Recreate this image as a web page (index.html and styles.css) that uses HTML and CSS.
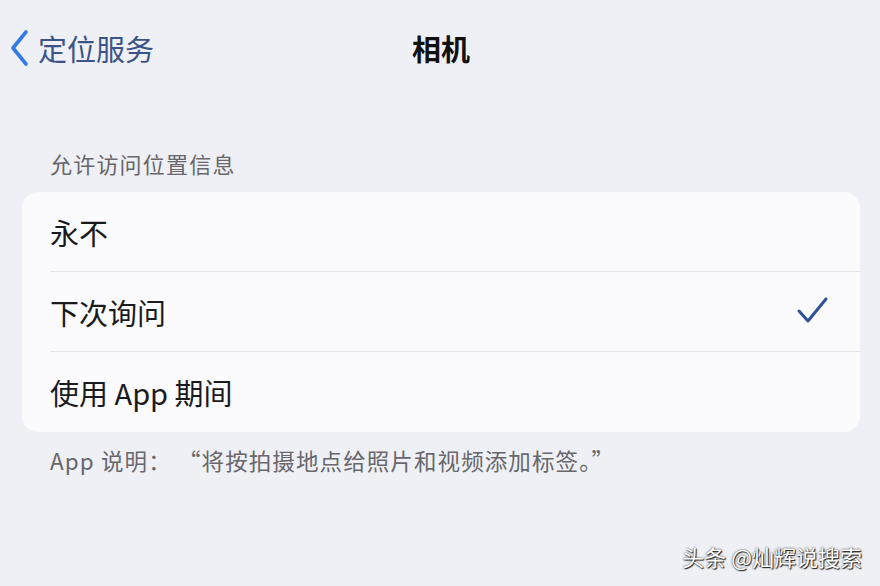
FILE: index.html
```html
<!DOCTYPE html>
<html lang="zh-CN">

<head>
    <meta charset="UTF-8">
    <meta name="viewport" content="width=device-width, initial-scale=1.0">
    <title>相机</title>
    <link rel="stylesheet" href="styles.css">
</head>

<body>
    <div class="screen">
        <div class="navBar">
            <div class="backButton">
                <svg class="chevron" width="22" height="38" viewBox="0 0 22 38">
                    <path d="M18 3 L5 19 L18 35" fill="none" stroke="#3579e6" stroke-width="3.6" stroke-linecap="round" stroke-linejoin="round" />
                </svg>
                <span>定位服务</span>
            </div>
            <div class="navTitle">相机</div>
        </div>

        <div class="sectionHeader">允许访问位置信息</div>
        <div class="card">
            <div class="row">
                <span>永不</span>
            </div>
            <div class="row">
                <span>下次询问</span>
                <svg class="check" width="34" height="30" viewBox="0 0 34 30">
                    <path d="M3 15 L12 25 L30 3" fill="none" stroke="#2f5296" stroke-width="3" stroke-linecap="round" stroke-linejoin="round" />
                </svg>
            </div>
            <div class="row">
                <span>使用 App 期间</span>
            </div>
        </div>
        <div class="sectionFooter">App 说明： “将按拍摄地点给照片和视频添加标签。”</div>

        <div class="watermark">头条 @灿辉说搜索</div>
    </div>
</body>

</html>
```

FILE: styles.css
```css
html,
body {
    margin: 0;
    padding: 0;
}

body {
    font-family: 'Noto Sans CJK SC', 'Noto Sans', sans-serif;
    background: #eff0f5;
    color: #1c1c1e;
}

.screen {
    position: relative;
    width: 880px;
    height: 586px;
    overflow: hidden;
}

.navBar {
    position: relative;
    height: 96px;
    display: flex;
    align-items: center;
    justify-content: center;
}

.backButton {
    position: absolute;
    left: 8px;
    top: 29px;
    display: flex;
    align-items: center;
    gap: 8px;
    font-size: 29px;
    color: #3b5487;
    line-height: 38px;
}

.navTitle {
    font-size: 29px;
    font-weight: bold;
    color: #111;
    margin-left: 2px;
}

.sectionHeader {
    margin: 52px 0 0 50px;
    font-size: 22px;
    letter-spacing: 1.2px;
    line-height: 30px;
    color: #67676c;
}

.card {
    margin: 14px 20px 0 22px;
    background: #fbfbfd;
    border-radius: 16px;
    overflow: hidden;
}

.row {
    height: 80px;
    margin-left: 28px;
    padding-right: 30px;
    display: flex;
    align-items: center;
    justify-content: space-between;
    font-size: 29px;
    color: #1a1a1c;
    border-bottom: 1.5px solid #e4e4e9;
    box-sizing: border-box;
}

.row:last-child {
    border-bottom: none;
}

.check {
    margin-top: -2px;
}

.sectionFooter {
    margin: 13px 0 0 50px;
    font-size: 22.5px;
    letter-spacing: 1.1px;
    line-height: 30px;
    color: #67676c;
}

.watermark {
    position: absolute;
    right: 18px;
    bottom: 14px;
    font-size: 22px;
    color: #fff;
    text-shadow: 0 0 2px #222, 1px 1px 1px #222;
}
```
